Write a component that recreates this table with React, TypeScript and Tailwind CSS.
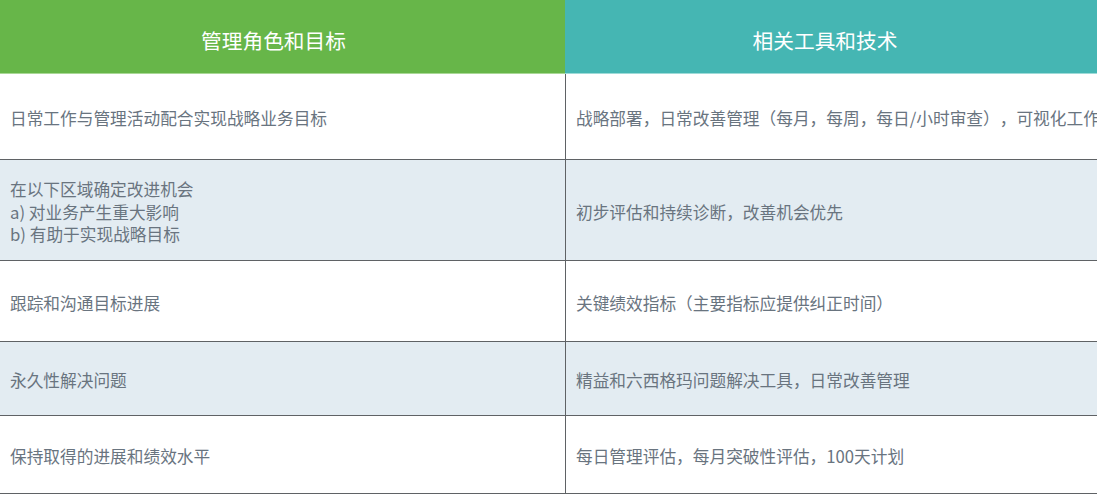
import React from "react";

const rows: { left: string[]; right: string; h: string; bg: string }[] = [
  {
    left: ["日常工作与管理活动配合实现战略业务目标"],
    right: "战略部署，日常改善管理（每月，每周，每日/小时审查），可视化工作场所",
    h: "h-[86px]",
    bg: "bg-white",
  },
  {
    left: ["在以下区域确定改进机会", "a) 对业务产生重大影响", "b) 有助于实现战略目标"],
    right: "初步评估和持续诊断，改善机会优先",
    h: "h-[101px]",
    bg: "bg-[#e3ecf2]",
  },
  {
    left: ["跟踪和沟通目标进展"],
    right: "关键绩效指标（主要指标应提供纠正时间）",
    h: "h-[81px]",
    bg: "bg-white",
  },
  {
    left: ["永久性解决问题"],
    right: "精益和六西格玛问题解决工具，日常改善管理",
    h: "h-[74px]",
    bg: "bg-[#e3ecf2]",
  },
  {
    left: ["保持取得的进展和绩效水平"],
    right: "每日管理评估，每月突破性评估，100天计划",
    h: "h-[78px]",
    bg: "bg-white",
  },
];

export default function App() {
  return (
    <div
      className="w-[1097px] h-[495px] overflow-hidden bg-white [text-spacing-trim:space-all]"
      style={{ fontFamily: '"Noto Sans CJK SC", "Noto Sans", sans-serif' }}
    >
      <div className="w-[1300px]">
        <div className="flex h-[74px]">
          <div className="w-[565px] shrink-0 bg-[#67b649] border-b border-[#a9d896] flex items-center justify-center pt-[8px] pr-[18px] text-white text-[20.7px] font-normal">
            管理角色和目标
          </div>
          <div className="flex-1 bg-[#45b6b3] border-b border-[#9edbd8] flex items-center pt-[8px] text-white text-[20.7px] font-normal">
            <span className="w-[520px] text-center">相关工具和技术</span>
          </div>
        </div>
        {rows.map((r, i) => (
          <div key={i} className={`flex ${r.h} ${r.bg} border-b border-[#5f6265]`}>
            <div className="w-[565px] shrink-0 flex flex-col justify-center pl-[10px] pt-[4px] text-[16.7px] leading-[22.5px] text-[#69747f]">
              {r.left.map((t, j) => (
                <div key={j}>{t}</div>
              ))}
            </div>
            <div className="flex-1 border-l border-[#5f6265] flex items-center pl-[10px] pt-[4px] text-[16.7px] leading-[22.5px] text-[#69747f] whitespace-nowrap">
              {r.right}
            </div>
          </div>
        ))}
      </div>
    </div>
  );
}
